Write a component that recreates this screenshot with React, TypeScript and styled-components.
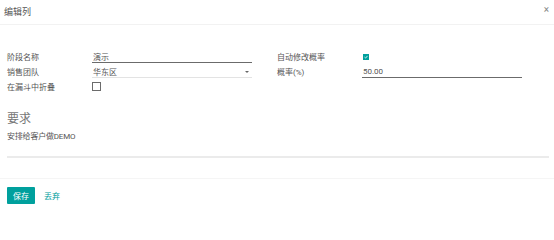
import styled, { createGlobalStyle } from 'styled-components';

const GlobalStyle = createGlobalStyle`
  html, body {
    margin: 0;
    padding: 0;
    background: #fff;
  }
  body {
    font-family: Roboto, "Noto Sans CJK SC", sans-serif;
    color: #555;
  }
`;

const Dialog = () => {
  return (
    <S.Wrap>
      <S.Header>
        <S.Title>编辑列</S.Title>
        <S.Close>×</S.Close>
      </S.Header>

      <S.Body>
        <S.Columns>
          <S.Group>
            <S.Label>阶段名称</S.Label>
            <S.Field $focused>演示</S.Field>
            <S.Label>销售团队</S.Label>
            <S.Field>
              华东区
              <S.Caret />
            </S.Field>
            <S.Label>在漏斗中折叠</S.Label>
            <S.CheckCell>
              <S.Check />
            </S.CheckCell>
          </S.Group>

          <S.Group>
            <S.Label>自动修改概率</S.Label>
            <S.CheckCell>
              <S.Check $checked>
                <svg width="4" height="4" viewBox="0 0 8 8">
                  <path d="M1 4.2 L3.2 6.2 L7 1.8" fill="none" stroke="#fff" strokeWidth="1.6" />
                </svg>
              </S.Check>
            </S.CheckCell>
            <S.Label>概率(%)</S.Label>
            <S.Field $focused>50.00</S.Field>
          </S.Group>
        </S.Columns>

        <S.Section>
          <h3>要求</h3>
          <p>安排给客户做DEMO</p>
          <div className="area" />
        </S.Section>
      </S.Body>

      <S.Footer>
        <S.Primary>保存</S.Primary>
        <S.Link>丢弃</S.Link>
      </S.Footer>
    </S.Wrap>
  );
};

export default function App() {
  return (
    <>
      <GlobalStyle />
      <Dialog />
    </>
  );
}

const S = {
  Wrap: styled.div`
    width: 554px;
    height: 210px;
    background: #fff;
    overflow: hidden;
  `,

  Header: styled.div`
    display: flex;
    align-items: center;
    justify-content: space-between;
    height: 24px;
    padding: 0 5px 0 4px;
    border-bottom: 1px solid #f2f2f2;
  `,

  Title: styled.div`
    font-size: 9px;
    color: #555;
    margin-top: -1px;
  `,

  Close: styled.div`
    font-size: 10px;
    line-height: 1;
    color: #888;
    margin-top: -5px;
  `,

  Body: styled.div`
    padding: 24px 5px 0 7px;
  `,

  Columns: styled.div`
    display: grid;
    grid-template-columns: 270px 270px;
    height: 61px;
  `,

  Group: styled.div`
    display: grid;
    grid-template-columns: 85px 160px;
    grid-auto-rows: 15px;
    align-content: start;
    align-items: center;
  `,

  Label: styled.div`
    font-size: 8px;
    color: #555;
    white-space: nowrap;
  `,

  Field: styled.div<{ $focused?: boolean }>`
    position: relative;
    display: flex;
    align-items: center;
    height: 12px;
    padding-left: 1px;
    font-size: 8px;
    color: #555;
    border-bottom: ${({ $focused }) => ($focused ? '1.5px solid #6b6b6b' : '1px solid #e3e3e3')};
  `,

  Caret: styled.span`
    position: absolute;
    right: 3px;
    top: 6px;
    width: 0;
    height: 0;
    border-left: 2px solid transparent;
    border-right: 2px solid transparent;
    border-top: 2px solid #666;
  `,

  CheckCell: styled.div`
    display: flex;
    align-items: center;
  `,

  Check: styled.span<{ $checked?: boolean }>`
    display: inline-flex;
    align-items: center;
    justify-content: center;
    box-sizing: border-box;
    width: ${({ $checked }) => ($checked ? '6px' : '9px')};
    height: ${({ $checked }) => ($checked ? '6px' : '9px')};
    margin-left: ${({ $checked }) => ($checked ? '1px' : '0')};
    background: ${({ $checked }) => ($checked ? '#00a09d' : '#fff')};
    border: ${({ $checked }) => ($checked ? 'none' : '1px solid #6b6b6b')};
  `,

  Section: styled.div`
    padding-top: 1px;

    h3 {
      margin: 0;
      font-size: 12px;
      line-height: 17px;
      font-weight: 400;
      color: #777;
    }

    p {
      margin: 3px 0 0;
      font-size: 8px;
      line-height: 12px;
      color: #555;
      letter-spacing: -0.2px;
    }

    .area {
      margin-top: 13px;
      height: 0;
      border-bottom: 2px solid #ebebeb;
    }
  `,

  Footer: styled.div`
    display: flex;
    align-items: center;
    gap: 9px;
    margin-top: 20px;
    padding: 8px 7px;
    border-top: 1px solid #f5f5f5;
  `,

  Primary: styled.button`
    height: 17px;
    padding: 0 6px;
    border: none;
    border-radius: 1px;
    background: #00a09d;
    color: #fff;
    font-family: Roboto, "Noto Sans CJK SC", sans-serif;
    font-size: 8px;
    cursor: pointer;
  `,

  Link: styled.a`
    font-size: 8px;
    color: #00a09d;
    cursor: pointer;
  `,
};
